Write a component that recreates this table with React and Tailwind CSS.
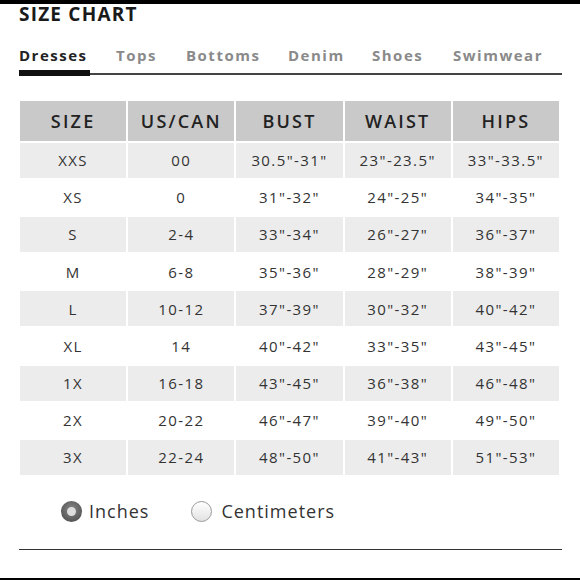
const tabs = [
  { label: "Dresses", w: "w-[97px]" },
  { label: "Tops", w: "w-[70px]" },
  { label: "Bottoms", w: "w-[102px]" },
  { label: "Denim", w: "w-[84px]" },
  { label: "Shoes", w: "w-[81px]" },
  { label: "Swimwear", w: "w-[90px]" },
];

const headers = ["SIZE", "US/CAN", "BUST", "WAIST", "HIPS"];

const rows = [
  ["XXS", "00", '30.5"-31"', '23"-23.5"', '33"-33.5"'],
  ["XS", "0", '31"-32"', '24"-25"', '34"-35"'],
  ["S", "2-4", '33"-34"', '26"-27"', '36"-37"'],
  ["M", "6-8", '35"-36"', '28"-29"', '38"-39"'],
  ["L", "10-12", '37"-39"', '30"-32"', '40"-42"'],
  ["XL", "14", '40"-42"', '33"-35"', '43"-45"'],
  ["1X", "16-18", '43"-45"', '36"-38"', '46"-48"'],
  ["2X", "20-22", '46"-47"', '39"-40"', '49"-50"'],
  ["3X", "22-24", '48"-50"', '41"-43"', '51"-53"'],
];

export default function App() {
  return (
    <div
      className="w-[580px] h-[580px] bg-white flex flex-col overflow-hidden text-[#333]"
      style={{ fontFamily: '"Open Sans", "Liberation Sans", sans-serif' }}
    >
      <div className="h-[4px] bg-black shrink-0" />

      <h1 className="ml-[19px] mt-0 text-[19px] leading-[20px] font-bold text-[#1a1a1a] tracking-[1.2px]">
        SIZE CHART
      </h1>

      {/* tabs */}
      <div className="ml-[19px] mt-[22px] w-[543px]">
        <div className="flex text-[15px] leading-[18px] font-bold tracking-[1.5px] whitespace-nowrap">
          {tabs.map((t, i) => (
            <span
              key={t.label}
              className={
                t.w + " " + (i === 0 ? "text-[#222]" : "text-[#8a8a8a]")
              }
            >
              {t.label}
            </span>
          ))}
        </div>
        <div className="relative mt-[6px] h-[7px]">
          <div className="absolute left-0 right-0 top-[3px] h-[1.5px] bg-[#444]" />
          <div className="absolute left-0 top-0 h-[6px] w-[71px] bg-[#111]" />
        </div>
      </div>

      {/* table */}
      <div className="ml-[20px] mt-[24px] w-[539px] grid grid-cols-5 gap-[2px]">
        {headers.map((h) => (
          <div
            key={h}
            className="h-[40px] bg-[#c9c9c9] flex items-center justify-center text-[18px] font-semibold tracking-[2.2px] text-[#222]"
          >
            {h}
          </div>
        ))}
        {rows.map((r, ri) =>
          r.map((c, ci) => (
            <div
              key={ri + "-" + ci}
              className={
                "h-[35.1px] flex items-center justify-center text-[15px] tracking-[1.4px] text-[#333] " +
                (ri % 2 === 0 ? "bg-[#ececec]" : "bg-white")
              }
            >
              {c}
            </div>
          ))
        )}
      </div>

      {/* units */}
      <div className="ml-[61px] mt-[23px] flex items-center text-[18px] tracking-[1px] text-[#333]">
        <span className="w-[21px] h-[21px] rounded-full bg-[radial-gradient(circle_at_50%_40%,#888,#444)] flex items-center justify-center mr-[7px]">
          <span className="w-[9px] h-[9px] rounded-full bg-[#ddd]" />
        </span>
        <span>Inches</span>
        <span className="ml-[42px] w-[21px] h-[21px] rounded-full border border-[#999] bg-[linear-gradient(#fff,#e2e2e2)] mr-[9px]" />
        <span>Centimeters</span>
      </div>

      <div className="ml-[19px] mt-[24px] w-[543px] h-[1.5px] bg-[#333]" />

      <div className="mt-auto h-[2px] bg-black" />
    </div>
  );
}
